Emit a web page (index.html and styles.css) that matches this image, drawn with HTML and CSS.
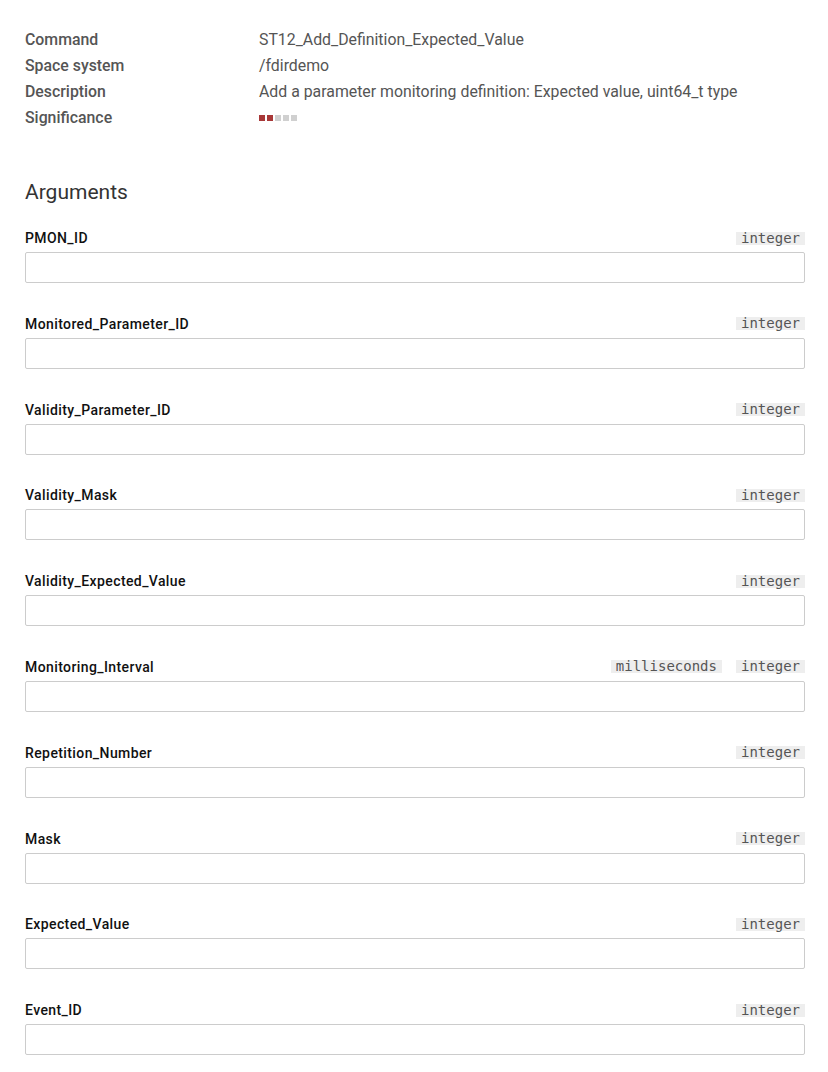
FILE: index.html
```html
<!DOCTYPE html>
<html>
<head>
<meta charset="utf-8">
<link rel="stylesheet" href="styles.css">
</head>
<body>
<div class="page">
  <dl class="info">
    <dt>Command</dt><dd>ST12_Add_Definition_Expected_Value</dd>
    <dt>Space system</dt><dd>/fdirdemo</dd>
    <dt>Description</dt><dd>Add a parameter monitoring definition: Expected value, uint64_t type</dd>
    <dt>Significance</dt>
    <dd><span class="sig"><i class="on"></i><i class="on"></i><i></i><i></i><i></i></span></dd>
  </dl>

  <h2 class="heading">Arguments</h2>

  <div class="args">
    <div class="arg">
      <div class="arg-head"><span class="arg-name">PMON_ID</span><span class="badges"><span class="badge">integer</span></span></div>
      <input class="field" type="text">
    </div>
    <div class="arg">
      <div class="arg-head"><span class="arg-name">Monitored_Parameter_ID</span><span class="badges"><span class="badge">integer</span></span></div>
      <input class="field" type="text">
    </div>
    <div class="arg">
      <div class="arg-head"><span class="arg-name">Validity_Parameter_ID</span><span class="badges"><span class="badge">integer</span></span></div>
      <input class="field" type="text">
    </div>
    <div class="arg">
      <div class="arg-head"><span class="arg-name">Validity_Mask</span><span class="badges"><span class="badge">integer</span></span></div>
      <input class="field" type="text">
    </div>
    <div class="arg">
      <div class="arg-head"><span class="arg-name">Validity_Expected_Value</span><span class="badges"><span class="badge">integer</span></span></div>
      <input class="field" type="text">
    </div>
    <div class="arg">
      <div class="arg-head"><span class="arg-name">Monitoring_Interval</span><span class="badges"><span class="badge">milliseconds</span><span class="badge">integer</span></span></div>
      <input class="field" type="text">
    </div>
    <div class="arg">
      <div class="arg-head"><span class="arg-name">Repetition_Number</span><span class="badges"><span class="badge">integer</span></span></div>
      <input class="field" type="text">
    </div>
    <div class="arg">
      <div class="arg-head"><span class="arg-name">Mask</span><span class="badges"><span class="badge">integer</span></span></div>
      <input class="field" type="text">
    </div>
    <div class="arg">
      <div class="arg-head"><span class="arg-name">Expected_Value</span><span class="badges"><span class="badge">integer</span></span></div>
      <input class="field" type="text">
    </div>
    <div class="arg">
      <div class="arg-head"><span class="arg-name">Event_ID</span><span class="badges"><span class="badge">integer</span></span></div>
      <input class="field" type="text">
    </div>
  </div>
</div>
</body>
</html>
```

FILE: styles.css
```css
html, body {
  margin: 0;
  padding: 0;
  background: #fff;
}
body {
  font-family: Roboto, "Liberation Sans", sans-serif;
  color: #555;
}
.page {
  padding: 27px 23px 0 25px;
}
.info {
  display: grid;
  grid-template-columns: 234px 1fr;
  margin: 0;
  font-size: 15.85px;
  line-height: 26px;
}
.info dt {
  font-weight: 500;
  color: #555;
}
.info dd {
  margin: 0;
  color: #555;
}
.sig {
  display: inline-flex;
  gap: 2px;
  vertical-align: middle;
  position: relative;
  top: -1px;
}
.sig i {
  display: block;
  width: 6px;
  height: 6px;
  background: #d0d0d0;
}
.sig i.on {
  background: #a83838;
}
.heading {
  margin: 46px 0 0;
  font-size: 21px;
  font-weight: 400;
  line-height: 30px;
  color: #333;
}
.args {
  margin-top: 23px;
}
.arg {
  margin-bottom: 32.8px;
}
.arg-head {
  display: flex;
  justify-content: space-between;
  align-items: center;
  height: 16px;
  margin-bottom: 6px;
}
.arg-name {
  font-size: 14px;
  font-weight: 500;
  letter-spacing: 0.4px;
  color: #111;
  line-height: 16px;
}
.badges {
  display: flex;
  gap: 14px;
}
.badge {
  display: inline-block;
  font-family: "DejaVu Sans Mono", monospace;
  font-size: 14px;
  line-height: 13px;
  padding: 0 5px;
  background: #eee;
  color: #555;
}
.field {
  display: block;
  box-sizing: border-box;
  width: 100%;
  height: 31px;
  margin: 0;
  border: 1px solid #ccc;
  border-radius: 2px;
  background: #fff;
  padding: 0 8px;
  font-family: Roboto, sans-serif;
  font-size: 14px;
  outline: none;
}
```
